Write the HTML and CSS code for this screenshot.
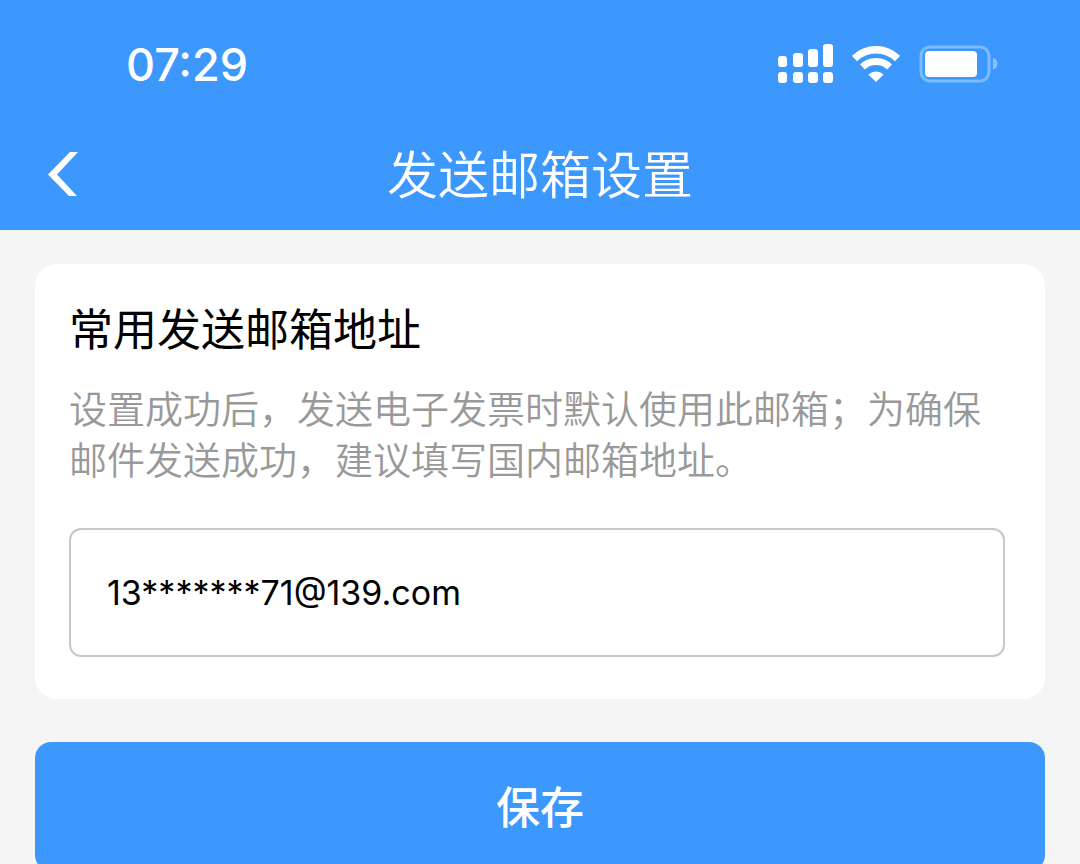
FILE: index.html
```html
<!DOCTYPE html>
<html lang="zh-CN">
<head>
  <meta charset="UTF-8" />
  <meta name="viewport" content="width=device-width, initial-scale=1.0" />
  <title>发送邮箱设置</title>
  <link rel="stylesheet" href="styles.css">
</head>
<body>
  <header class="header">
    <div class="status-bar">
      <time class="status-time">07:29</time>
      <div class="status-icons">
        <!-- dual sim signal -->
        <svg width="56" height="40" viewBox="0 0 56 40" fill="#fff" aria-hidden="true">
          <rect x="1" y="12" width="9" height="11" rx="3" />
          <rect x="16" y="9" width="10" height="14" rx="3" />
          <rect x="31" y="5" width="10" height="18" rx="3" />
          <rect x="46" y="0" width="10" height="23" rx="3" />
          <rect x="1" y="28" width="9" height="11" rx="3" />
          <rect x="16" y="28" width="10" height="11" rx="3" />
          <rect x="31" y="28" width="10" height="11" rx="3" />
          <rect x="46" y="28" width="10" height="11" rx="3" />
        </svg>
        <!-- wifi -->
        <svg width="48" height="38" viewBox="0 0 48 38" aria-hidden="true">
          <path d="M2.500 13.500a31 31 0 0 1 43 0" fill="none" stroke="#fff" stroke-width="7.500" />
          <path d="M10.500 22a19.500 19.500 0 0 1 27 0" fill="none" stroke="#fff" stroke-width="7" />
          <path d="M16.400 29.500a11 11 0 0 1 15.200 0L24 37z" fill="#fff" />
        </svg>
        <!-- battery -->
        <svg width="80" height="38" viewBox="0 0 80 38" aria-hidden="true">
          <rect x="2" y="2" width="68" height="34" rx="9" fill="none" stroke="#7dbbfe" stroke-width="3" />
          <rect x="6" y="6" width="52" height="26" rx="4" fill="#fff" />
          <path d="M74 13c6 1.500 6 10 0 11.500z" fill="#8cc3fe" />
        </svg>
      </div>
    </div>
    <nav class="nav-bar">
      <a class="back" href="#" aria-label="返回">
        <svg width="30" height="44" viewBox="0 0 30 44" aria-hidden="true">
          <path d="M22 0h8L9 22.500 29 44h-8L0 22.500z" fill="#fff" />
        </svg>
      </a>
      <h1 class="title">发送邮箱设置</h1>
    </nav>
  </header>

  <form class="content">
    <section class="card">
      <h2 class="card-title"><label for="email">常用发送邮箱地址</label></h2>
      <p class="card-text">设置成功后，发送电子发票时默认使用此邮箱；为确保邮件发送成功，建议填写国内邮箱地址。</p>
      <input class="email" id="email" type="text" value="13*******71@139.com" />
    </section>
    <button class="save" type="button">保存</button>
  </form>
</body>
</html>
```

FILE: styles.css
```css
*, *::before, *::after {
  margin: 0;
  padding: 0;
  box-sizing: border-box;
}
body {
  font-family: Inter, 'Noto Sans CJK SC', sans-serif;
  background: #f5f5f5;
  color: #000;
}

/* Header */
.header {
  background: #3c98fc;
  color: #fff;
}
.status-bar {
  display: flex;
  justify-content: space-between;
  align-items: center;
  height: 118px;
  padding: 10px 81px 0 126px;
}
.status-time {
  font-size: 45px;
  font-weight: 500;
}
.status-icons {
  display: flex;
  align-items: center;
  gap: 19px;
}
.nav-bar {
  display: grid;
  grid-template-columns: 1fr auto 1fr;
  align-items: center;
  height: 112px;
  padding: 0 48px;
}
.back svg {
  display: block;
}
.title {
  padding-top: 4px;
  font-size: 51px;
  font-weight: 350;
  line-height: 60px;
}

/* Form */
.content {
  padding: 34px 35px 0;
}
.card {
  padding: 36px 40px 42px 34px;
  background: #fff;
  border-radius: 22px;
}
.card-title {
  font-size: 44px;
  font-weight: 400;
  line-height: 60px;
}
.card-text {
  margin: 24px 0 42px;
  font-size: 38px;
  font-weight: 350;
  line-height: 51px;
  color: #999;
}
.email {
  display: block;
  width: 100%;
  height: 129px;
  padding: 0 36px;
  border: 2px solid #c8c8c8;
  border-radius: 12px;
  background: #fff;
  color: #000;
  font-family: inherit;
  font-size: 34px;
}
.save {
  display: block;
  width: 100%;
  height: 129px;
  margin-top: 43px;
  padding-bottom: 4px;
  border: none;
  border-radius: 16px;
  background: #3c98fc;
  color: #fff;
  font-family: inherit;
  font-size: 44px;
  font-weight: 500;
}
```
